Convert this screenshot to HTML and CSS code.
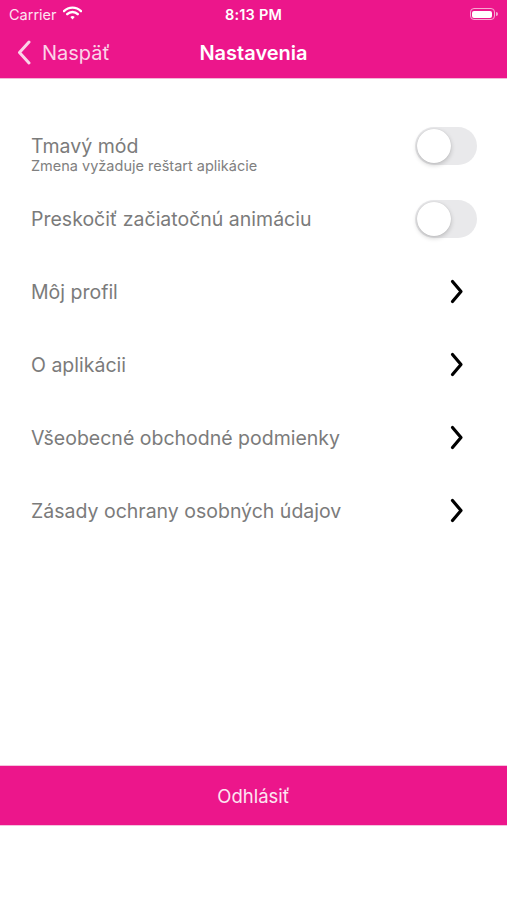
FILE: index.html
```html
<!DOCTYPE html>
<html lang="sk">
<head>
  <meta charset="UTF-8" />
  <meta name="viewport" content="width=device-width, initial-scale=1" />
  <title>Nastavenia</title>
  <link rel="stylesheet" href="styles.css">
</head>
<body>
  <div class="screen">
    <header class="top">
      <div class="status">
        <div class="status-left">
          <span>Carrier</span>
          <svg class="wifi" width="19" height="14" viewBox="0 0 19 14">
            <path d="M1 5.2 A12 12 0 0 1 18 5.2" fill="none" stroke="#fff" stroke-width="2.4" stroke-linecap="round"/>
            <path d="M4.2 8.2 A7.5 7.5 0 0 1 14.8 8.2" fill="none" stroke="#fff" stroke-width="2.4" stroke-linecap="round"/>
            <path d="M7.3 11 L9.5 13.4 L11.7 11 A3.2 3.2 0 0 0 7.3 11 Z" fill="#fff"/>
          </svg>
        </div>
        <div class="status-time">8:13 PM</div>
        <div class="status-right">
          <div class="battery"><div class="battery-fill"></div></div>
          <div class="battery-tip"></div>
        </div>
      </div>
      <nav class="navbar">
        <a class="back" href="javascript:history.back()">
          <svg width="14" height="25" viewBox="0 0 14 25">
            <path d="M12 2 L2.5 12.5 L12 23" fill="none" stroke="#fbd4e8" stroke-width="3" stroke-linecap="round" stroke-linejoin="round"/>
          </svg>
          <span>Naspäť</span>
        </a>
        <h1 class="title">Nastavenia</h1>
      </nav>
    </header>

    <main class="settings">
      <div class="row">
        <div class="label label-sub">
          <div class="label-main">Tmavý mód</div>
          <div class="label-note">Zmena vyžaduje reštart aplikácie</div>
        </div>
        <div class="toggle"><div class="knob"></div></div>
      </div>
      <div class="row">
        <div class="label">Preskočiť začiatočnú animáciu</div>
        <div class="toggle"><div class="knob"></div></div>
      </div>
      <div class="row">
        <div class="label">Môj profil</div>
        <svg class="chevron" width="14" height="25" viewBox="0 0 14 25"><path d="M2.5 2.5 L11 12.5 L2.5 22.5" fill="none" stroke="#000" stroke-width="3.2" stroke-linecap="round" stroke-linejoin="round"/></svg>
      </div>
      <div class="row">
        <div class="label">O aplikácii</div>
        <svg class="chevron" width="14" height="25" viewBox="0 0 14 25"><path d="M2.5 2.5 L11 12.5 L2.5 22.5" fill="none" stroke="#000" stroke-width="3.2" stroke-linecap="round" stroke-linejoin="round"/></svg>
      </div>
      <div class="row">
        <div class="label">Všeobecné obchodné podmienky</div>
        <svg class="chevron" width="14" height="25" viewBox="0 0 14 25"><path d="M2.5 2.5 L11 12.5 L2.5 22.5" fill="none" stroke="#000" stroke-width="3.2" stroke-linecap="round" stroke-linejoin="round"/></svg>
      </div>
      <div class="row">
        <div class="label">Zásady ochrany osobných údajov</div>
        <svg class="chevron" width="14" height="25" viewBox="0 0 14 25"><path d="M2.5 2.5 L11 12.5 L2.5 22.5" fill="none" stroke="#000" stroke-width="3.2" stroke-linecap="round" stroke-linejoin="round"/></svg>
      </div>
    </main>

    <button class="logout" type="button">Odhlásiť</button>
  </div>
</body>
</html>
```

FILE: styles.css
```css
/* Global Styles */
body {
  margin: 0;
  font-family: Inter, "Noto Sans", sans-serif;
  background-color: #fff;
}
.screen {
  display: flex;
  flex-direction: column;
  height: 900px;
}

/* Header */
.top {
  background-color: #ec168b;
  color: #fff;
  height: 79px;
  border-bottom: 1px solid #f3b6d6;
  box-sizing: border-box;
}
.status {
  display: flex;
  align-items: center;
  justify-content: space-between;
  height: 28px;
  padding: 0 9px;
  font-size: 14.5px;
}
.status-left {
  display: flex;
  align-items: center;
  gap: 6px;
  width: 120px;
  color: #fde4f1;
}
.wifi {
  margin-top: -3px;
}
.status-time {
  font-weight: 600;
  letter-spacing: 0.2px;
}
.status-right {
  display: flex;
  align-items: center;
  justify-content: flex-end;
  width: 120px;
}
.battery {
  width: 25px;
  height: 12px;
  border: 1.5px solid #f6a9d1;
  border-radius: 4px;
  padding: 1.5px;
  box-sizing: border-box;
  display: flex;
}
.battery-fill {
  flex: 1;
  background-color: #fff;
  border-radius: 2px;
}
.battery-tip {
  width: 2px;
  height: 4px;
  background-color: #f6a9d1;
  border-radius: 0 2px 2px 0;
  margin-left: 1px;
}

.navbar {
  display: flex;
  align-items: center;
  justify-content: center;
  height: 50px;
  position: relative;
}
.back {
  position: absolute;
  left: 17px;
  top: 12px;
  display: flex;
  align-items: center;
  gap: 11px;
  color: #fbd4e8;
  text-decoration: none;
  font-size: 20px;
}
.title {
  margin: 0;
  font-size: 20px;
  font-weight: 600;
  color: #fff;
}

/* Settings list */
.settings {
  padding: 30px 30px 0 31px;
}
.row {
  display: flex;
  align-items: center;
  justify-content: space-between;
  height: 73px;
}
.label {
  font-size: 19.5px;
  color: #7b7b7b;
}
.label-sub {
  padding-top: 17px;
}
.label-main {
  line-height: 24px;
}
.label-note {
  font-size: 14.5px;
  line-height: 16px;
  color: #808080;
}
.toggle {
  width: 62px;
  height: 38px;
  border-radius: 19px;
  background-color: #e9e9eb;
  padding: 2px;
  box-sizing: border-box;
}
.knob {
  width: 34px;
  height: 34px;
  border-radius: 50%;
  background-color: #fff;
  box-shadow: 0 2px 5px rgba(0, 0, 0, 0.2), 0 0 1px rgba(0, 0, 0, 0.15);
}
.chevron {
  margin-right: 13px;
}

/* Logout */
.logout {
  margin-top: auto;
  margin-bottom: 74px;
  height: 61px;
  border: none;
  border-top: 1px solid #f5c2dd;
  border-bottom: 1px solid #f5c2dd;
  background-color: #ec168b;
  color: #fde4f1;
  font-family: Inter, "Noto Sans", sans-serif;
  font-size: 18.5px;
  width: 100%;
}
```
